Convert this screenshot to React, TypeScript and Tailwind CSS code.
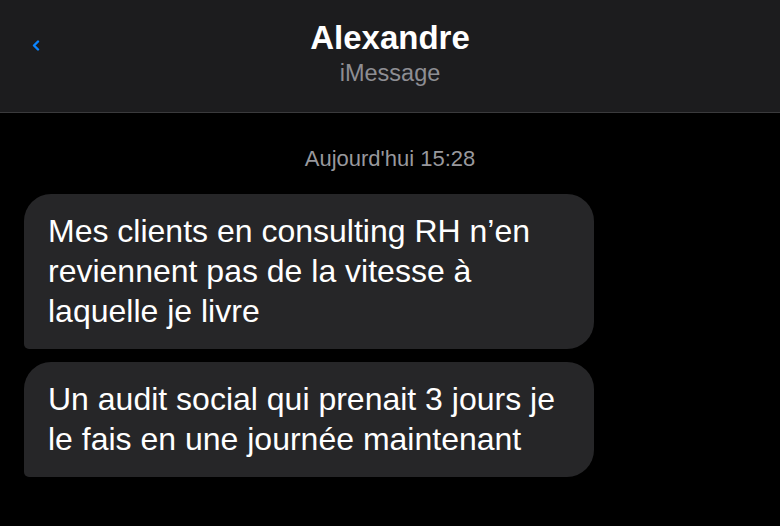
import React from "react";

const font = { fontFamily: '"Liberation Sans", Arial, sans-serif' };

export default function App() {
  return (
    <div className="w-[780px] h-[526px] bg-black overflow-hidden" style={font}>
      <div className="relative h-[113px] bg-[#1c1c1e] border-b border-[#3a3a3c] flex flex-col items-center pt-[18px]">
        <svg
          className="absolute left-[32px] top-[40px]"
          width="8"
          height="11"
          viewBox="0 0 8 11"
          fill="none"
        >
          <path d="M6 1.5 L2 5.5 L6 9.5" stroke="#0a84ff" strokeWidth="2.4" strokeLinecap="round" strokeLinejoin="round" />
        </svg>
        <div className="text-[33px] leading-[40px] font-bold text-white">Alexandre</div>
        <div className="text-[23.5px] leading-[28px] text-[#8e8e93] mt-[1px]">iMessage</div>
      </div>
      <div className="flex flex-col pt-[33px]">
        <div className="text-center text-[22px] leading-[26px] text-[#98989d]">Aujourd'hui 15:28</div>
        <div className="flex flex-col gap-[13px] pl-[24px] mt-[22px]">
          <div className="w-[570px] bg-[#262628] rounded-[27px] rounded-bl-[5px] pl-[24px] pr-[20px] pt-[17px] pb-[18px] text-white text-[32px] leading-[40px]">
            Mes clients en consulting RH n’en reviennent pas de la vitesse à laquelle je livre
          </div>
          <div className="w-[570px] bg-[#262628] rounded-[27px] rounded-bl-[5px] pl-[24px] pr-[20px] pt-[17px] pb-[18px] text-white text-[32px] leading-[40px]">
            Un audit social qui prenait 3 jours je le fais en une journée maintenant
          </div>
        </div>
      </div>
    </div>
  );
}
